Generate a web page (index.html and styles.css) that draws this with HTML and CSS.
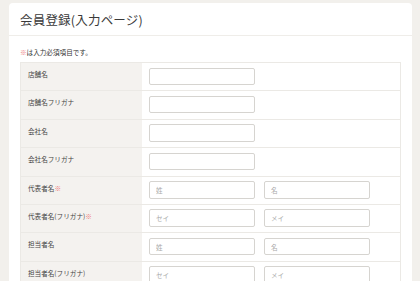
FILE: index.html
```html
<!DOCTYPE html>
<html lang="ja">
<head>
<meta charset="utf-8">
<title>会員登録(入力ページ)</title>
<link rel="stylesheet" href="styles.css">
</head>
<body>
<div class="card">
  <div class="card-head"><h1 class="title">会員登録(入力ページ)</h1></div>
  <div class="card-body">
    <p class="note"><span class="req">※</span>は入力必須項目です。</p>
    <div class="form">
      <div class="row"><div class="label">店舗名</div><div class="field"><input class="inp" type="text"></div></div>
      <div class="row"><div class="label">店舗名フリガナ</div><div class="field"><input class="inp" type="text"></div></div>
      <div class="row"><div class="label">会社名</div><div class="field"><input class="inp" type="text"></div></div>
      <div class="row"><div class="label">会社名フリガナ</div><div class="field"><input class="inp" type="text"></div></div>
      <div class="row"><div class="label">代表者名<span class="req">※</span></div><div class="field"><input class="inp" type="text" placeholder="姓"><input class="inp" type="text" placeholder="名"></div></div>
      <div class="row"><div class="label">代表者名(フリガナ)<span class="req">※</span></div><div class="field"><input class="inp" type="text" placeholder="セイ"><input class="inp" type="text" placeholder="メイ"></div></div>
      <div class="row"><div class="label">担当者名</div><div class="field"><input class="inp" type="text" placeholder="姓"><input class="inp" type="text" placeholder="名"></div></div>
      <div class="row"><div class="label">担当者名(フリガナ)</div><div class="field"><input class="inp" type="text" placeholder="セイ"><input class="inp" type="text" placeholder="メイ"></div></div>
    </div>
  </div>
</div>
</body>
</html>
```

FILE: styles.css
```css
html, body {
  margin: 0;
  padding: 0;
  height: 100%;
  overflow: hidden;
}
body {
  background: #f2f0ec;
  font-family: "Noto Sans CJK JP", "Noto Sans", sans-serif;
  color: #444;
}
.card {
  margin: 3px 8px 0 9px;
  background: #fff;
  border-radius: 4px;
  min-height: 100%;
}
.card-head {
  height: 32px;
  border-bottom: 1px solid #efede9;
  padding-left: 11px;
  display: flex;
  align-items: center;
}
.title {
  margin: 0;
  font-size: 12.5px;
  font-weight: normal;
  color: #3a3a3a;
  letter-spacing: 0.2px;
}
.card-body {
  padding: 11px 11px 0 11px;
}
.note {
  margin: 0 0 5px 0;
  font-size: 6.6px;
  line-height: 10px;
  color: #333;
}
.req {
  color: #ee7777;
}
.form {
  border: 1px solid #ebe9e5;
  border-bottom: none;
}
.row {
  display: grid;
  grid-template-columns: 121px 1fr;
  height: 28.4px;
  box-sizing: border-box;
  border-bottom: 1px solid #ebe9e5;
}
.label {
  background: #f4f2ef;
  padding: 6px 0 0 7px;
  font-size: 6.6px;
  line-height: 10px;
  color: #444;
}
.field {
  display: flex;
  gap: 9px;
  padding: 4.5px 0 0 7px;
  align-items: flex-start;
}
.inp {
  width: 106px;
  height: 17.5px;
  box-sizing: border-box;
  border: 1px solid #d6d4d0;
  border-radius: 2px;
  margin: 0;
  padding: 0 6px;
  font-family: inherit;
  font-size: 6.6px;
  background: #fff;
  outline: none;
}
.inp::placeholder {
  color: #aaa;
}
```
